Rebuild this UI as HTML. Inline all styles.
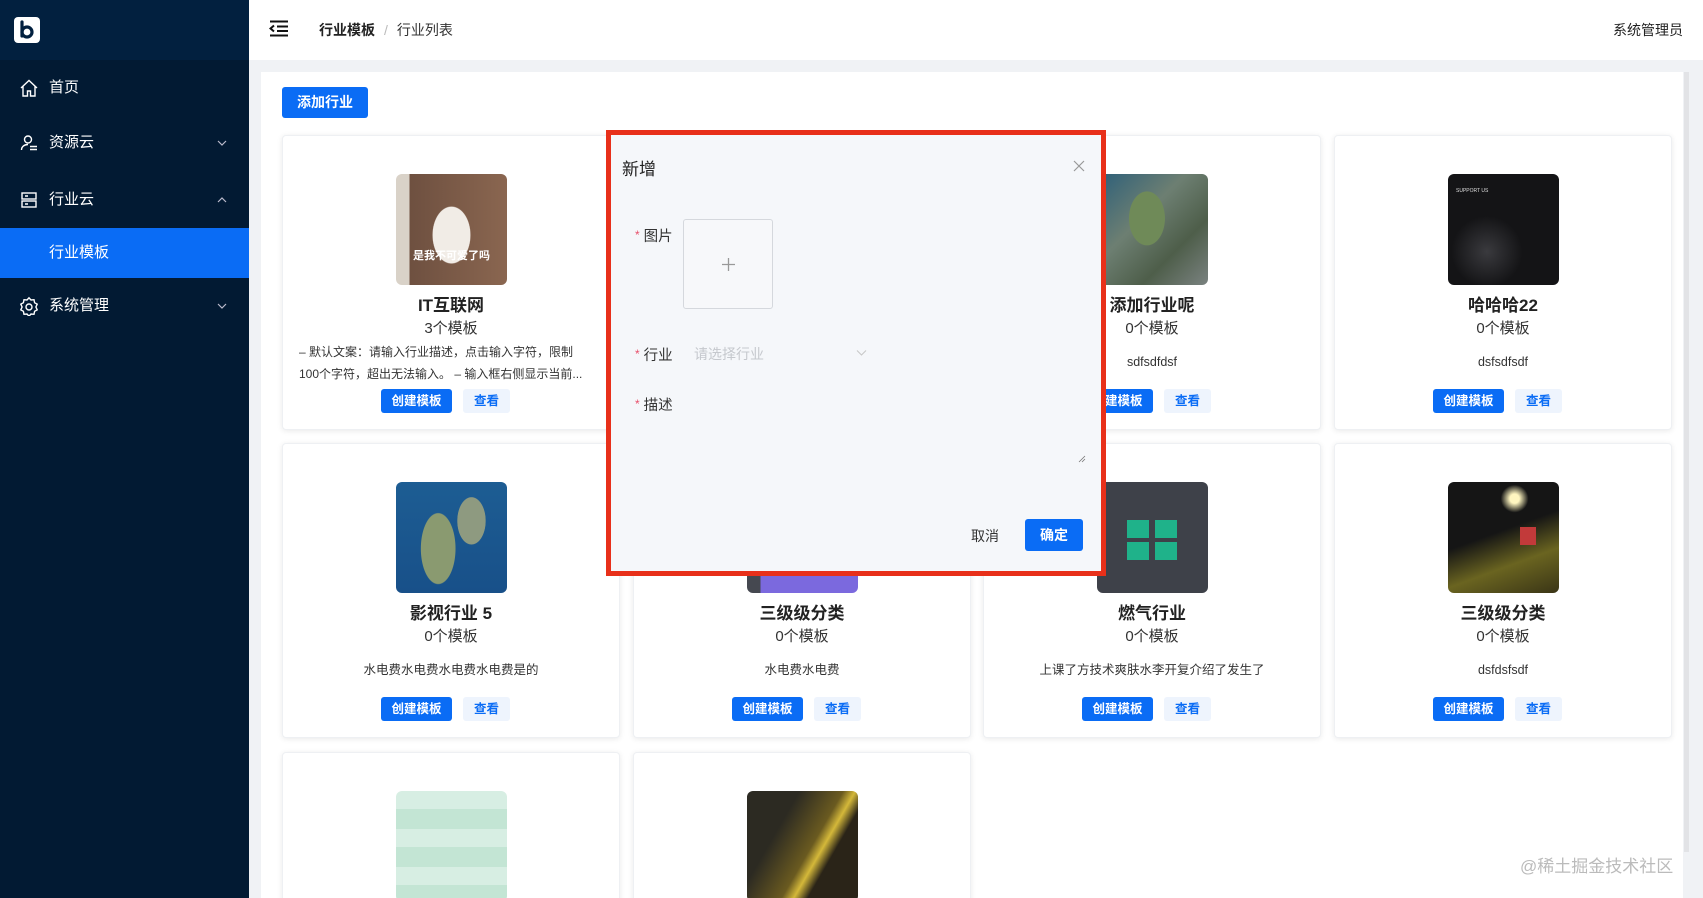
<!DOCTYPE html>
<html><head><meta charset="utf-8"><style>
*{margin:0;padding:0;box-sizing:border-box}
html{width:1703px;height:898px;overflow:hidden}
body{width:1703px;height:898px;overflow:hidden;background:#f0f2f5;font-family:"Liberation Sans","Noto Sans CJK SC",sans-serif;position:relative;color:#1f1f1f}
.abs{position:absolute}
#side{left:0;top:0;width:249px;height:898px;background:#021a33}
#side .top{position:absolute;left:0;top:0;width:249px;height:60px;background:#02203f}
.logo{position:absolute;left:14px;top:17px;width:26px;height:26px;background:#fff;border-radius:4px}
.mi{position:absolute;left:0;width:249px;height:50px;color:#fff;font-size:15px;line-height:50px;padding-left:49px}
.mi svg.ic{position:absolute;left:19px;top:15px}
.mi .chev{position:absolute;right:22px;top:20px}
#hdr{left:249px;top:0;width:1454px;height:60px;background:#fff}
#panel{left:261px;top:72px;width:1422px;height:826px;background:#fff}
.btn{position:absolute;background:#0a6cf5;color:#fff;border-radius:3px;text-align:center;font-weight:bold}
.card{position:absolute;width:338px;height:295px;background:#fff;border-radius:4px;box-shadow:0 1px 6px rgba(0,0,0,.09);border:1px solid #eef0f3;text-align:center;overflow:hidden}
.card .img{position:absolute;left:113px;top:38px;width:111px;height:111px;border-radius:6px;overflow:hidden}
.card .t{position:absolute;left:0;right:0;top:155px;font-size:17px;font-weight:bold;color:#222}
.card .c{position:absolute;left:0;right:0;top:181px;font-size:15px;color:#333}
.card .d{position:absolute;left:20px;right:20px;top:215px;font-size:12.5px;color:#333;line-height:22px}
.card .b1{position:absolute;left:98px;top:253px;width:71px;height:24px;line-height:24px;font-size:12.5px;background:#0a6cf5;color:#fff;border-radius:3px;font-weight:bold}
.card .b2{position:absolute;left:180px;top:253px;width:47px;height:24px;line-height:24px;font-size:12.5px;background:#eef4fd;color:#0a6cf5;border-radius:3px;font-weight:bold}
#modal{left:606px;top:130px;width:500px;height:446px;background:#f5f7fa;border:5px solid #e8301a}
.lbl{position:absolute;font-size:14.5px;color:#333}
.lbl b{color:#e8506a;font-weight:normal;font-size:12px;margin-right:4px;vertical-align:2px}
</style></head><body>
<div id="side" class="abs">
 <div class="top"></div>
 <div class="logo"><svg width="26" height="26" viewBox="0 0 26 26"><path d="M8 5v14" stroke="#02203f" stroke-width="3.2" stroke-linecap="round"/><circle cx="13" cy="15" r="5" fill="none" stroke="#02203f" stroke-width="3.2"/></svg></div>
 <div class="mi" style="top:63px"><svg class="ic" width="20" height="20" viewBox="0 0 20 20" fill="none" stroke="#fff" stroke-width="1.4"><path d="M2 10L10 2.5 18 10M4 8.5V18h4.5v-5h3v5H16V8.5"/></svg>首页</div>
 <div class="mi" style="top:118px"><svg class="ic" width="20" height="20" viewBox="0 0 20 20" fill="none" stroke="#fff" stroke-width="1.4"><circle cx="9" cy="6.5" r="3.5"/><path d="M2.5 17c0-3.5 3-5.5 6.5-5.5M11 13.5h7M11 16.5h7"/></svg>资源云<svg class="chev" width="10" height="10" viewBox="0 0 10 10"><path d="M1 3l4 4 4-4" stroke="#bbc" fill="none" stroke-width="1.2"/></svg></div>
 <div class="mi" style="top:175px"><svg class="ic" width="20" height="20" viewBox="0 0 20 20" fill="none" stroke="#fff" stroke-width="1.4"><rect x="3" y="3" width="14" height="6"/><rect x="3" y="11" width="14" height="6"/><path d="M6 6h3M6 14h3"/></svg>行业云<svg class="chev" width="10" height="10" viewBox="0 0 10 10"><path d="M1 7l4-4 4 4" stroke="#bbc" fill="none" stroke-width="1.2"/></svg></div>
 <div class="mi" style="top:228px;background:#0a6cf5;height:50px">行业模板</div>
 <div class="mi" style="top:281px"><svg class="ic" width="20" height="20" viewBox="0 0 20 20" fill="none" stroke="#fff" stroke-width="1.4"><path d="M10 1.8l2 2.2 3-.3.6 3 2.6 1.5-1.3 2.8 1.3 2.8-2.6 1.5-.6 3-3-.3-2 2.2-2-2.2-3 .3-.6-3L1.8 13.8 3.1 11 1.8 8.2l2.6-1.5.6-3 3 .3z"/><circle cx="10" cy="11" r="3"/></svg>系统管理<svg class="chev" width="10" height="10" viewBox="0 0 10 10"><path d="M1 3l4 4 4-4" stroke="#bbc" fill="none" stroke-width="1.2"/></svg></div>
</div>
<div id="hdr" class="abs">
 <svg style="position:absolute;left:20px;top:20px" width="20" height="17" viewBox="0 0 20 17" fill="none" stroke="#111" stroke-width="2"><path d="M1 1.5h18M8 6.5h11M8 11h11M1 15.5h18M5 5.5L1.5 8.5 5 11.5"/></svg>
 <div style="position:absolute;left:70px;top:20px;font-size:14px;color:#222"><b>行业模板</b><span style="color:#bbb;margin:0 9px">/</span><span style="color:#333">行业列表</span></div>
 <div style="position:absolute;right:20px;top:20px;font-size:14px;color:#222">系统管理员</div>
</div>
<div id="panel" class="abs"></div>
<div class="abs" style="left:1684px;top:72px;width:5px;height:780px;background:#e2e3e6"></div>
<div class="btn" style="left:282px;top:87px;width:86px;height:31px;line-height:31px;font-size:14px">添加行业</div>

<div class="card" style="left:282px;top:135px"><div class="img" style="background:radial-gradient(ellipse 28% 42% at 50% 55%,#f1ece6 60%,transparent 62%),linear-gradient(90deg,#d9d2c8 0 12%,#6e5040 12%,#8a6650)"><div style="position:absolute;bottom:22px;left:0;right:0;color:#fff;font-size:11px;font-weight:bold">是我不可爱了吗</div></div><div class="t">IT互联网</div><div class="c">3个模板</div><div class="d" style="top:205px;left:16px;right:10px;text-align:left;font-size:12px;white-space:nowrap">– 默认文案：请输入行业描述，点击输入字符，限制<br>100个字符，超出无法输入。 – 输入框右侧显示当前...</div><div class="b1">创建模板</div><div class="b2">查看</div></div>
<div class="card" style="left:633px;top:135px"></div>
<div class="card" style="left:983px;top:135px"><div class="img" style="background:radial-gradient(ellipse 20% 30% at 45% 40%,#6f8a58 80%,transparent 82%),linear-gradient(135deg,#2c5f7a,#6d7f72 40%,#4e5e4a 70%,#7a8280)"></div><div class="t">添加行业呢</div><div class="c">0个模板</div><div class="d">sdfsdfdsf</div><div class="b1">创建模板</div><div class="b2">查看</div></div>
<div class="card" style="left:1334px;top:135px"><div class="img" style="background:radial-gradient(ellipse 40% 40% at 35% 70%,#3a3a3e,#141416 80%),#141416"><div style="position:absolute;left:8px;top:14px;color:#ddd;font-size:5px">SUPPORT US</div></div><div class="t">哈哈哈22</div><div class="c">0个模板</div><div class="d">dsfsdfsdf</div><div class="b1">创建模板</div><div class="b2">查看</div></div>

<div class="card" style="left:282px;top:443px"><div class="img" style="background:radial-gradient(ellipse 22% 45% at 38% 60%,#8a9a70 70%,transparent 72%),radial-gradient(ellipse 18% 30% at 68% 35%,#8e9a80 70%,transparent 72%),linear-gradient(#1d5d93,#185089)"></div><div class="t">影视行业 5</div><div class="c">0个模板</div><div class="d">水电费水电费水电费水电费是的</div><div class="b1">创建模板</div><div class="b2">查看</div></div>
<div class="card" style="left:633px;top:443px"><div class="img" style="background:linear-gradient(90deg,#454850 0 12%,#7b69de 12%)"></div><div class="t">三级级分类</div><div class="c">0个模板</div><div class="d">水电费水电费</div><div class="b1">创建模板</div><div class="b2">查看</div></div>
<div class="card" style="left:983px;top:443px"><div class="img" style="background:#3e4149"><div style="position:absolute;left:30px;top:38px;width:22px;height:18px;background:#1fb28a"></div><div style="position:absolute;left:58px;top:38px;width:22px;height:18px;background:#1fb28a"></div><div style="position:absolute;left:30px;top:60px;width:22px;height:18px;background:#1fb28a"></div><div style="position:absolute;left:58px;top:60px;width:22px;height:18px;background:#1fb28a"></div></div><div class="t">燃气行业</div><div class="c">0个模板</div><div class="d">上课了方技术爽肤水李开复介绍了发生了</div><div class="b1">创建模板</div><div class="b2">查看</div></div>
<div class="card" style="left:1334px;top:443px"><div class="img" style="background:radial-gradient(circle at 60% 15%,#fff6c0 0 4%,transparent 12%),linear-gradient(160deg,#151515 45%,#6a6420 70%,#3a3516)"><div style="position:absolute;left:72px;top:45px;width:16px;height:18px;background:#c23a3a"></div></div><div class="t">三级级分类</div><div class="c">0个模板</div><div class="d">dsfdsfsdf</div><div class="b1">创建模板</div><div class="b2">查看</div></div>

<div class="card" style="left:282px;top:752px;height:160px"><div class="img" style="background:repeating-linear-gradient(#d7eee3 0 18px,#c3e5d4 18px 38px)"></div></div>
<div class="card" style="left:633px;top:752px;height:160px"><div class="img" style="background:linear-gradient(120deg,#2c2a22 30%,#6a5a20 55%,#d4b83a 62%,#2a2418 70%)"></div></div>

<div class="abs" style="left:1520px;top:852px;font-size:17px;color:#bbb">@稀土掘金技术社区</div>

<div id="modal" class="abs">
 <div style="position:absolute;left:11px;top:20px;font-size:17px;color:#222">新增</div>
 <svg style="position:absolute;left:462px;top:25px" width="12" height="12" viewBox="0 0 12 12" stroke="#999" stroke-width="1.2"><path d="M1 1l10 10M11 1L1 11"/></svg>
 <div class="lbl" style="left:24px;top:90px"><b>*</b>图片</div>
 <div style="position:absolute;left:72px;top:84px;width:90px;height:90px;border:1px solid #d5d8dd;border-radius:3px;background:#f7f8fa"><svg style="position:absolute;left:38px;top:38px" width="13" height="13" viewBox="0 0 13 13" stroke="#999" stroke-width="1.3"><path d="M6.5 0v13M0 6.5h13"/></svg></div>
 <div class="lbl" style="left:24px;top:209px"><b>*</b>行业</div>
 <div style="position:absolute;left:83px;top:209px;font-size:14px;color:#c5c8cd">请选择行业</div>
 <svg style="position:absolute;left:245px;top:214px" width="11" height="8" viewBox="0 0 11 8"><path d="M1 1.5l4.5 4.5 4.5-4.5" stroke="#c8c8c8" fill="none" stroke-width="1.1"/></svg>
 <div class="lbl" style="left:24px;top:259px"><b>*</b>描述</div>
 <svg style="position:absolute;left:467px;top:320px" width="8" height="8" viewBox="0 0 8 8" stroke="#777" stroke-width="0.8"><path d="M1 7L7 1M4 7l3-3"/></svg>
 <div style="position:absolute;left:360px;top:391px;font-size:14px;color:#333">取消</div>
 <div class="btn" style="left:414px;top:384px;width:58px;height:32px;line-height:32px;font-size:14px">确定</div>
</div>
</body></html>
